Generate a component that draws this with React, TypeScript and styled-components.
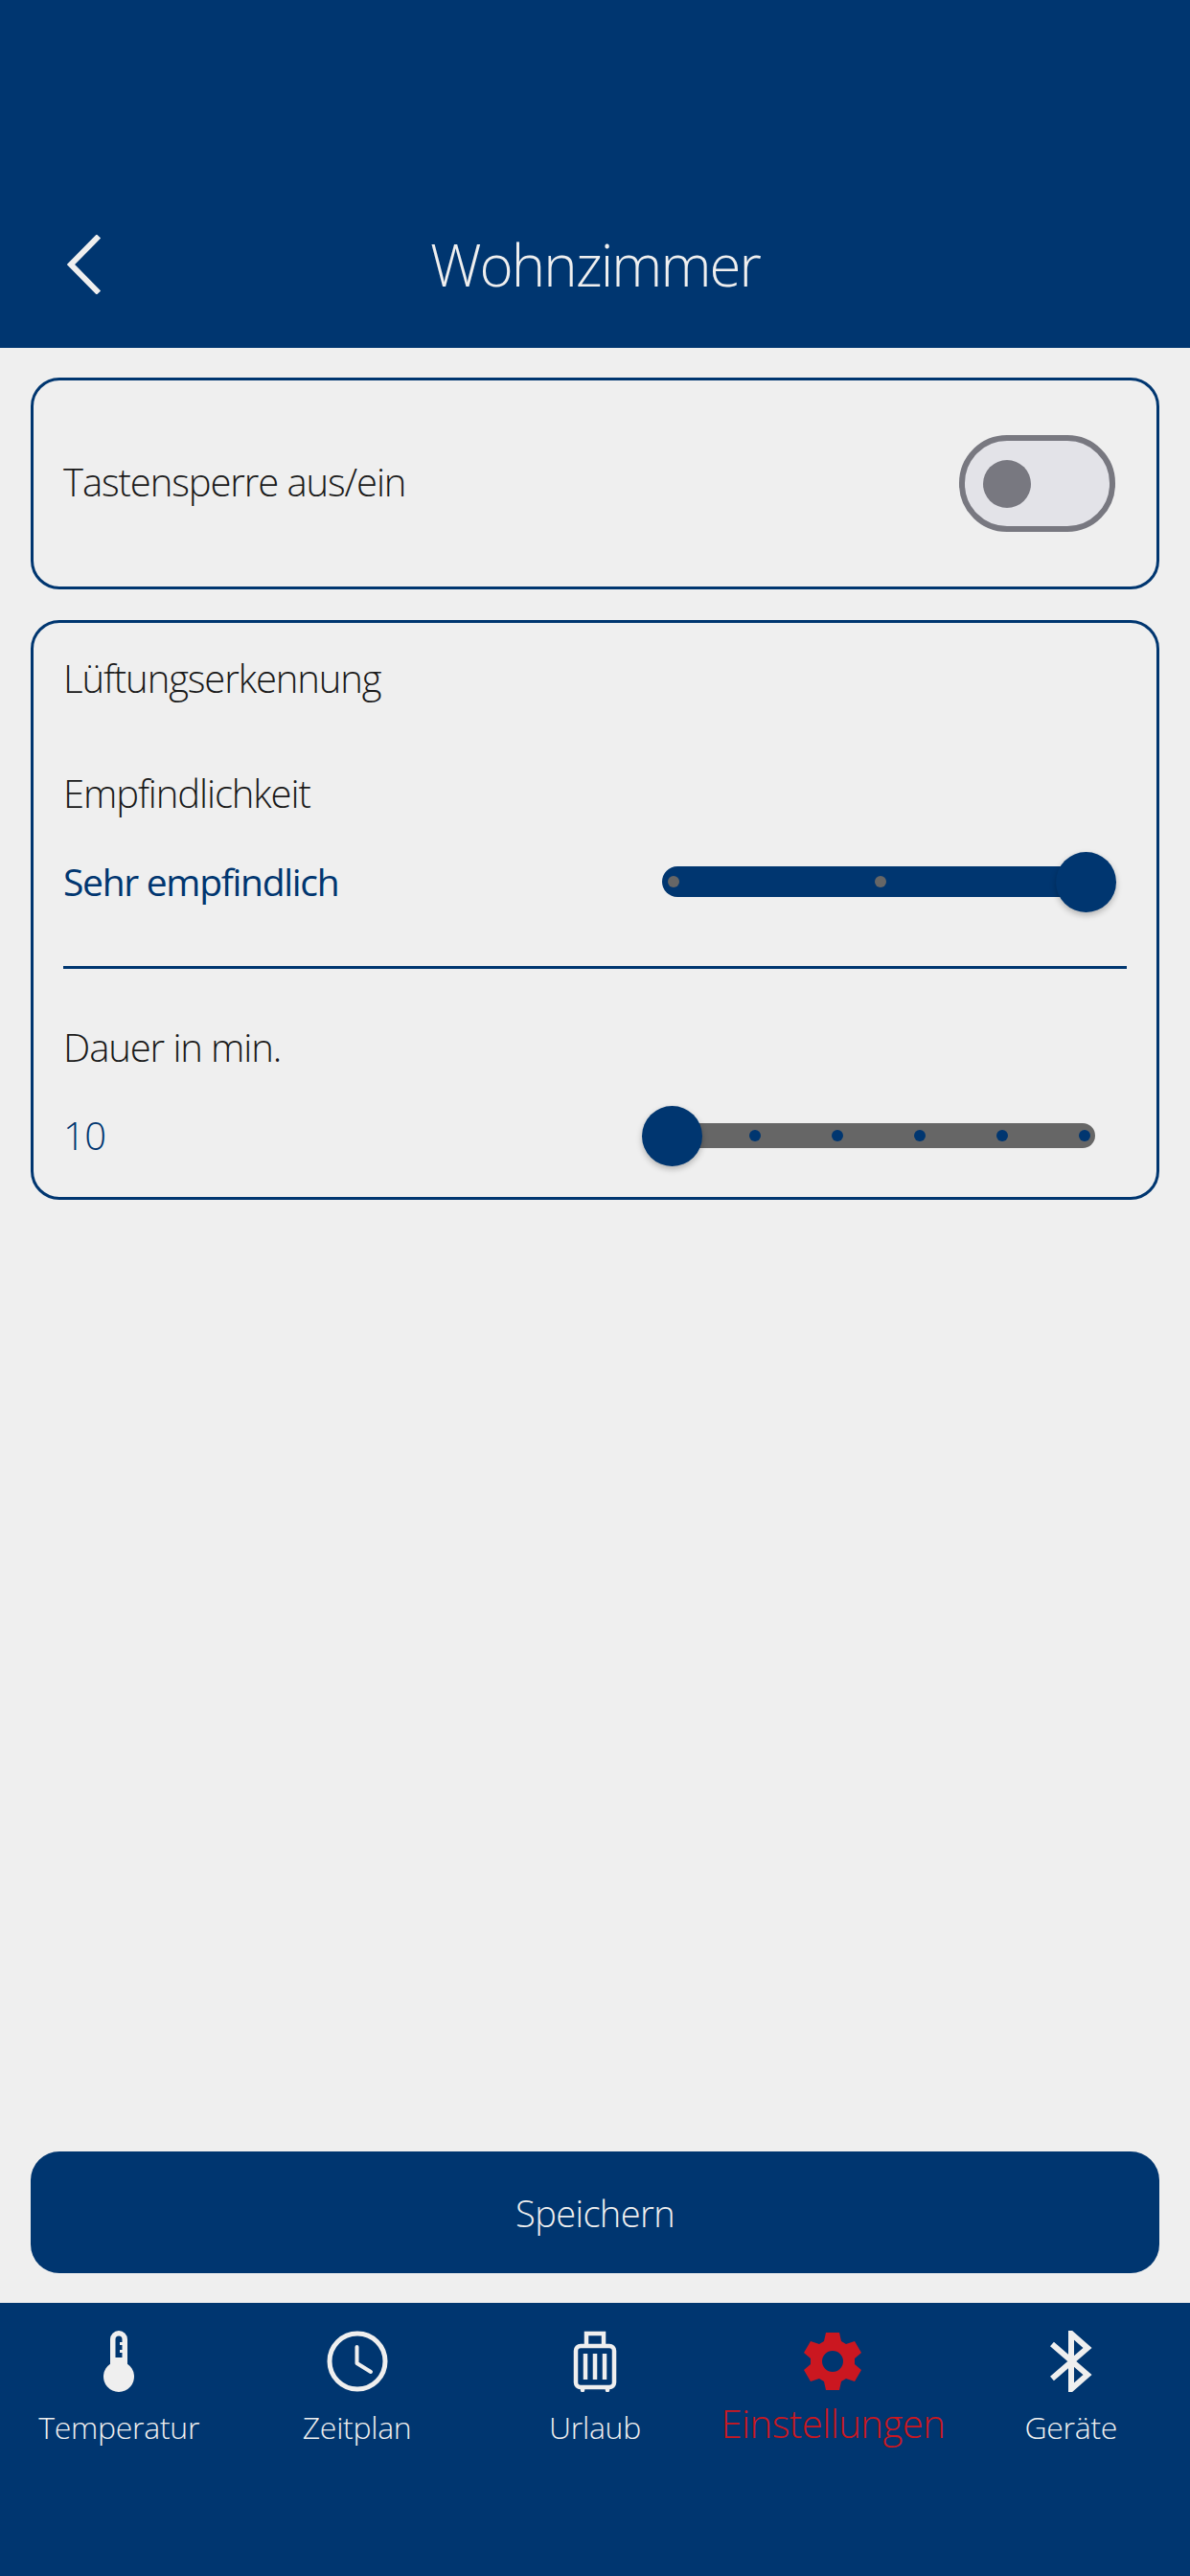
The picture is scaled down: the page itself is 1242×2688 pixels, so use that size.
import React from 'react'
import styled, { createGlobalStyle } from 'styled-components'

const NAVY = '#003670'
const LIGHT = '#efefef'
const FONT = `'Open Sans', 'Liberation Sans', sans-serif`

const GlobalStyle = createGlobalStyle`
  html, body {
    margin: 0;
    padding: 0;
    background: ${LIGHT};
  }
  * {
    box-sizing: border-box;
  }
`

const Screen = styled.div`
  width: 1242px;
  height: 2688px;
  display: flex;
  flex-direction: column;
  background: ${LIGHT};
  font-family: ${FONT};
  font-weight: 300;
`

const Header = styled.header`
  height: 363px;
  flex: none;
  background: ${NAVY};
  color: ${LIGHT};
  display: grid;
  grid-template-columns: 1fr auto 1fr;
  align-items: center;
  padding: 238px 32px 49px;
`

const BackIcon = styled.svg`
  width: 36px;
  height: 62px;
  margin-left: 38px;
  display: block;
`

const Title = styled.h1`
  margin: 0;
  font-size: 60px;
  font-weight: 300;
  line-height: 76px;
  letter-spacing: -1.9px;
`

const Main = styled.main`
  flex: 1;
  display: flex;
  flex-direction: column;
  gap: 32px;
  padding: 31px 32px 31px;
`

const Card = styled.section`
  border: 3px solid ${NAVY};
  border-radius: 30px;
  padding: 0 31px;
`

const ToggleCard = styled(Card)`
  height: 221px;
  display: flex;
  align-items: center;
  justify-content: space-between;
  padding-right: 43px;
`

const Label = styled.div`
  font-size: 40px;
  line-height: 50px;
  color: #1a1a1a;
  letter-spacing: -1.1px;
`

const ToggleLabel = styled(Label)`
  margin-top: -3px;
`

const Value = styled(Label)<{ $regular?: boolean }>`
  color: ${NAVY};
  font-weight: ${(p) => (p.$regular ? 400 : 300)};
  font-size: ${(p) => (p.$regular ? 39 : 40)}px;
  letter-spacing: ${(p) => (p.$regular ? -1.3 : -0.5)}px;
`

const Toggle = styled.div`
  width: 163px;
  height: 101px;
  border: 6px solid #787880;
  border-radius: 50px;
  background: #e3e3e8;
  display: flex;
  align-items: center;
  padding-left: 19px;
`

const ToggleKnob = styled.div`
  width: 50px;
  height: 50px;
  border-radius: 50%;
  background: #787880;
`

const SettingsCard = styled(Card)`
  height: 605px;
  padding-top: 33px;
`

const SectionTitle = styled(Label)`
  margin-bottom: 70px;
`

const SliderRow = styled.div`
  display: flex;
  align-items: center;
  justify-content: space-between;
  height: 64px;
  margin-top: 35px;
`

const Divider = styled.hr`
  border: none;
  height: 3px;
  background: ${NAVY};
  margin: 56px 0 57px;
`

const Track = styled.div<{ $w: number; $h: number; $bg: string; $right: number }>`
  position: relative;
  width: ${(p) => p.$w}px;
  height: ${(p) => p.$h}px;
  margin-right: ${(p) => p.$right}px;
  border-radius: ${(p) => p.$h / 2}px;
  background: ${(p) => p.$bg};
`

const Dot = styled.span<{ $x: number; $color: string }>`
  position: absolute;
  top: 50%;
  left: ${(p) => p.$x}px;
  width: 12px;
  height: 12px;
  margin: -6px 0 0 -6px;
  border-radius: 50%;
  background: ${(p) => p.$color};
`

const Thumb = styled.span<{ $x: number }>`
  position: absolute;
  top: 50%;
  left: ${(p) => p.$x}px;
  width: 63px;
  height: 63px;
  margin: -31.5px 0 0 -31.5px;
  border-radius: 50%;
  background: ${NAVY};
  box-shadow: 0 3px 6px rgba(0, 0, 0, 0.25);
`

const SaveButton = styled.button`
  margin-top: auto;
  height: 127px;
  flex: none;
  border: none;
  border-radius: 30px;
  background: ${NAVY};
  color: ${LIGHT};
  font-family: ${FONT};
  font-weight: 300;
  font-size: 38px;
  letter-spacing: -0.6px;
`

const Nav = styled.nav`
  height: 285px;
  flex: none;
  background: ${NAVY};
  display: grid;
  grid-template-columns: repeat(5, 1fr);
  padding-top: 29px;
`

const NavItem = styled.div<{ $active?: boolean }>`
  display: flex;
  flex-direction: column;
  align-items: center;
  color: ${(p) => (p.$active ? '#cb1720' : LIGHT)};
`

const NavIcon = styled.svg`
  width: 64px;
  height: 64px;
  display: block;
`

const NavLabel = styled.span<{ $active?: boolean }>`
  font-size: ${(p) => (p.$active ? 40 : 32)}px;
  line-height: 44px;
  margin-top: ${(p) => (p.$active ? 11 : 15)}px;
  letter-spacing: ${(p) => (p.$active ? -0.5 : -0.3)}px;
  white-space: nowrap;
`

const ThermometerIcon = () => (
  <NavIcon viewBox="0 0 64 64">
    <path
      fill="currentColor"
      fillRule="evenodd"
      d="M23 9a9 9 0 0 1 18 0v25.700a16 16 0 1 1-18 0ZM28.500 9v19h7v-5h-2.500v-3h2.500v-5h-2.500v-3h2.500V9a3.500 3.500 0 0 0-7 0Z"
    />
  </NavIcon>
)

const ClockIcon = () => (
  <NavIcon viewBox="0 0 64 64" fill="none" stroke="currentColor" strokeLinecap="round" strokeLinejoin="round">
    <circle cx="32" cy="32" r="29" strokeWidth="5" />
    <path d="M31.500 17v17l14.500 9" strokeWidth="4" />
  </NavIcon>
)

const SuitcaseIcon = () => (
  <NavIcon viewBox="0 0 64 64" fill="none" stroke="currentColor" strokeWidth="4.500">
    <rect x="12" y="16" width="40" height="43" rx="5" />
    <path d="M23 15V3h18v12M22 24v27M32 24v27M42 24v27" />
    <path d="M19 60v2M45 60v2" strokeLinecap="round" />
  </NavIcon>
)

const GearIcon = () => (
  <NavIcon viewBox="0 0 64 64">
    <path
      fill="currentColor"
      fillRule="evenodd"
      d="M25 2h14l2 9 5 3 9-3 7 12-7 6v6l7 6-7 12-9-3-5 3-2 9H25l-2-9-5-3-9 3-7-12 7-6v-6l-7-6 7-12 9 3 5-3ZM32 21a11 11 0 1 0 0 22 11 11 0 0 0 0-22Z"
    />
  </NavIcon>
)

const BluetoothIcon = () => (
  <NavIcon viewBox="0 0 64 64" fill="none" stroke="currentColor" strokeWidth="6">
    <path d="M12 14l37 32-17 15V3l17 15L12 50" />
  </NavIcon>
)

const navItems = [
  { label: 'Temperatur', icon: <ThermometerIcon /> },
  { label: 'Zeitplan', icon: <ClockIcon /> },
  { label: 'Urlaub', icon: <SuitcaseIcon /> },
  { label: 'Einstellungen', icon: <GearIcon />, active: true },
  { label: 'Geräte', icon: <BluetoothIcon /> },
]

export default function App() {
  return (
    <Screen>
      <GlobalStyle />
      <Header>
        <BackIcon viewBox="0 0 36 62" fill="none" stroke="currentColor" strokeWidth="6">
          <path d="M33 1.500 4 31l29 29.500" />
        </BackIcon>
        <Title>Wohnzimmer</Title>
      </Header>
      <Main>
        <ToggleCard>
          <ToggleLabel>Tastensperre aus/ein</ToggleLabel>
          <Toggle>
            <ToggleKnob />
          </Toggle>
        </ToggleCard>
        <SettingsCard>
          <SectionTitle>Lüftungserkennung</SectionTitle>
          <Label>Empfindlichkeit</Label>
          <SliderRow>
            <Value $regular>Sehr empfindlich</Value>
            <Track $w={470} $h={32} $bg={NAVY} $right={15}>
              <Dot $x={12} $color="#666" />
              <Dot $x={228} $color="#666" />
              <Thumb $x={442} />
            </Track>
          </SliderRow>
          <Divider />
          <Label>Dauer in min.</Label>
          <SliderRow>
            <Value>10</Value>
            <Track $w={455} $h={26} $bg="#666" $right={33}>
              <Dot $x={100} $color={NAVY} />
              <Dot $x={186} $color={NAVY} />
              <Dot $x={272} $color={NAVY} />
              <Dot $x={358} $color={NAVY} />
              <Dot $x={444} $color={NAVY} />
              <Thumb $x={13} />
            </Track>
          </SliderRow>
        </SettingsCard>
        <SaveButton>Speichern</SaveButton>
      </Main>
      <Nav>
        {navItems.map((item) => (
          <NavItem key={item.label} $active={item.active}>
            {item.icon}
            <NavLabel $active={item.active}>{item.label}</NavLabel>
          </NavItem>
        ))}
      </Nav>
    </Screen>
  )
}
